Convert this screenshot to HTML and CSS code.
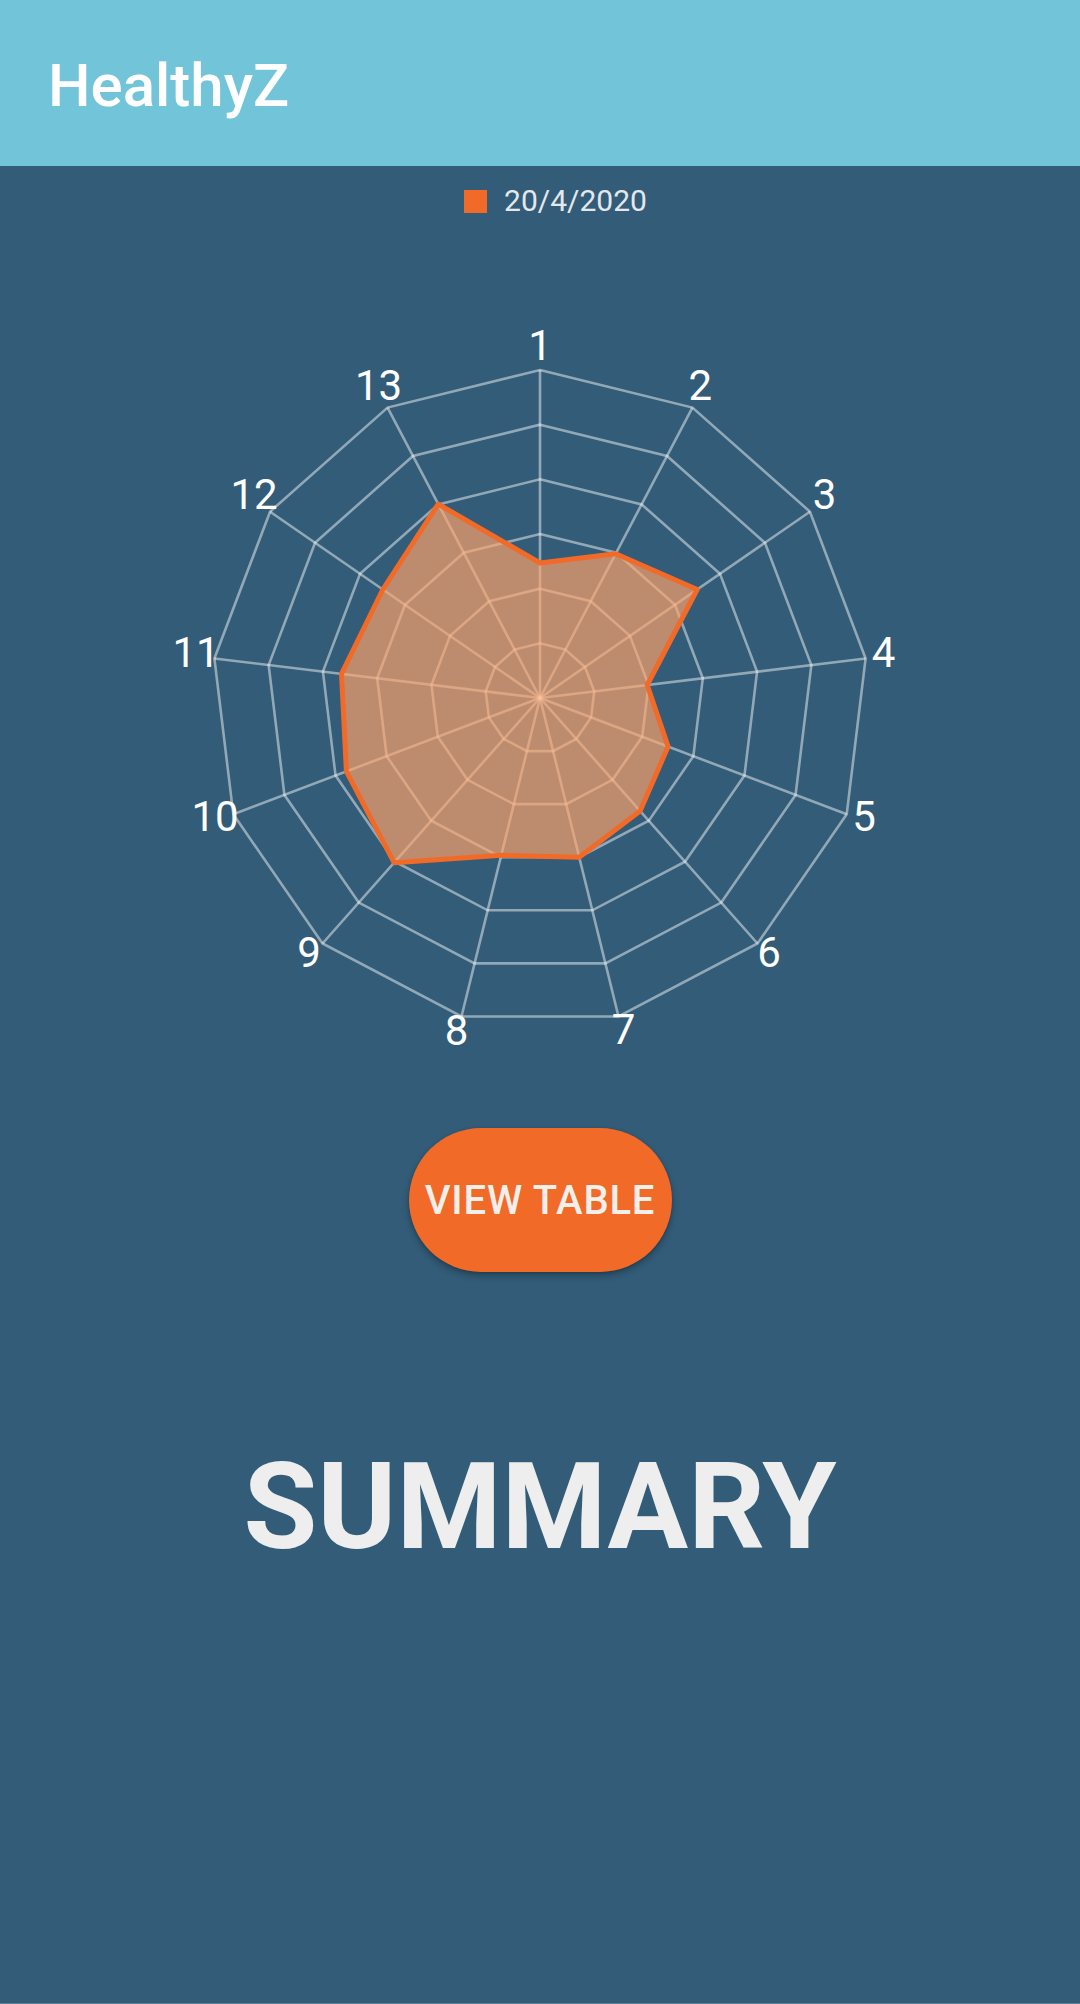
FILE: index.html
```html
<!DOCTYPE html>
<html lang="en">
<head>
<meta charset="utf-8">
<title>HealthyZ</title>
<link rel="stylesheet" href="styles.css">
</head>
<body>
<div class="app">
  <header class="toolbar">
    <h1 class="title">HealthyZ</h1>
  </header>
  <main class="content">
    <div class="legend">
      <span class="legend-swatch"></span>
      <span class="legend-label">20/4/2020</span>
    </div>
    <svg class="radar" width="1080" height="862" viewBox="0 0 1080 862" xmlns="http://www.w3.org/2000/svg">
      <g transform="translate(540 480)">
        <g class="web">
          <polygon transform="scale(54.667)" vector-effect="non-scaling-stroke" points="0,-1 0.46472,-0.88546 0.82298,-0.56806 0.99271,-0.12054 0.93502,0.3546 0.66312,0.74851 0.23932,0.97094 -0.23932,0.97094 -0.66312,0.74851 -0.93502,0.3546 -0.99271,-0.12054 -0.82298,-0.56806 -0.46472,-0.88546"/>
          <polygon transform="scale(109.333)" vector-effect="non-scaling-stroke" points="0,-1 0.46472,-0.88546 0.82298,-0.56806 0.99271,-0.12054 0.93502,0.3546 0.66312,0.74851 0.23932,0.97094 -0.23932,0.97094 -0.66312,0.74851 -0.93502,0.3546 -0.99271,-0.12054 -0.82298,-0.56806 -0.46472,-0.88546"/>
          <polygon transform="scale(164)" vector-effect="non-scaling-stroke" points="0,-1 0.46472,-0.88546 0.82298,-0.56806 0.99271,-0.12054 0.93502,0.3546 0.66312,0.74851 0.23932,0.97094 -0.23932,0.97094 -0.66312,0.74851 -0.93502,0.3546 -0.99271,-0.12054 -0.82298,-0.56806 -0.46472,-0.88546"/>
          <polygon transform="scale(218.667)" vector-effect="non-scaling-stroke" points="0,-1 0.46472,-0.88546 0.82298,-0.56806 0.99271,-0.12054 0.93502,0.3546 0.66312,0.74851 0.23932,0.97094 -0.23932,0.97094 -0.66312,0.74851 -0.93502,0.3546 -0.99271,-0.12054 -0.82298,-0.56806 -0.46472,-0.88546"/>
          <polygon transform="scale(273.333)" vector-effect="non-scaling-stroke" points="0,-1 0.46472,-0.88546 0.82298,-0.56806 0.99271,-0.12054 0.93502,0.3546 0.66312,0.74851 0.23932,0.97094 -0.23932,0.97094 -0.66312,0.74851 -0.93502,0.3546 -0.99271,-0.12054 -0.82298,-0.56806 -0.46472,-0.88546"/>
          <polygon transform="scale(328)" vector-effect="non-scaling-stroke" points="0,-1 0.46472,-0.88546 0.82298,-0.56806 0.99271,-0.12054 0.93502,0.3546 0.66312,0.74851 0.23932,0.97094 -0.23932,0.97094 -0.66312,0.74851 -0.93502,0.3546 -0.99271,-0.12054 -0.82298,-0.56806 -0.46472,-0.88546"/>
          <line x1="0" y1="0" x2="0" y2="-328"/>
          <line x1="0" y1="0" x2="152.4" y2="-290.4"/>
          <line x1="0" y1="0" x2="269.9" y2="-186.3"/>
          <line x1="0" y1="0" x2="325.6" y2="-39.5"/>
          <line x1="0" y1="0" x2="306.7" y2="116.3"/>
          <line x1="0" y1="0" x2="217.5" y2="245.5"/>
          <line x1="0" y1="0" x2="78.5" y2="318.5"/>
          <line x1="0" y1="0" x2="-78.5" y2="318.5"/>
          <line x1="0" y1="0" x2="-217.5" y2="245.5"/>
          <line x1="0" y1="0" x2="-306.7" y2="116.3"/>
          <line x1="0" y1="0" x2="-325.6" y2="-39.5"/>
          <line x1="0" y1="0" x2="-269.9" y2="-186.3"/>
          <line x1="0" y1="0" x2="-152.4" y2="-290.4"/>
        </g>
        <polygon class="data" points="0,-135 75.7,-144.3 157.2,-108.5 107.2,-13 128.1,48.6 100.1,113 39.2,159.2 -38.8,157.3 -145.9,164.7 -193.6,73.4 -198.5,-24.1 -157.2,-108.5 -101.8,-193.9"/>
        <g class="labels">
          <text x="0" y="-338">1</text>
          <text x="160.3" y="-298">2</text>
          <text x="284.5" y="-189">3</text>
          <text x="343.5" y="-31.5">4</text>
          <text x="324" y="132.5">5</text>
          <text x="229" y="269">6</text>
          <text x="83.5" y="346">7</text>
          <text x="-83.5" y="347">8</text>
          <text x="-231" y="269">9</text>
          <text x="-325" y="132.5">10</text>
          <text x="-344" y="-31.5">11</text>
          <text x="-286" y="-189">12</text>
          <text x="-161.5" y="-298">13</text>
        </g>
      </g>
    </svg>
    <button class="view-btn" type="button">VIEW TABLE</button>
    <h2 class="summary">SUMMARY</h2>
  </main>
</div>
</body>
</html>
```

FILE: styles.css
```css
html, body {
  margin: 0;
  padding: 0;
}

body {
  background: #325c78;
  font-family: Roboto, "Liberation Sans", sans-serif;
}

.app {
  min-height: 2004px;
  box-sizing: border-box;
  display: flex;
  flex-direction: column;
  background: #325c78;
  border-bottom: 1px solid #5c8098;
}

.toolbar {
  height: 166px;
  background: #72c4d9;
  display: flex;
  align-items: center;
  padding-left: 48px;
  box-sizing: border-box;
}

.title {
  margin: 6px 0 0 0;
  font-size: 60px;
  font-weight: 500;
  color: #ffffff;
  line-height: 1;
}

.content {
  display: flex;
  flex-direction: column;
  align-items: center;
}

.legend {
  margin-top: 18px;
  height: 34px;
  display: flex;
  align-items: center;
  gap: 17px;
  margin-left: 31px;
}

.legend-swatch {
  width: 23px;
  height: 23px;
  background: #f26a28;
}

.legend-label {
  font-size: 30px;
  line-height: 34px;
  color: #e4e8ec;
}

.radar {
  display: block;
}

.web polygon,
.web line {
  fill: none;
  stroke: rgba(255, 255, 255, 0.47);
  stroke-width: 2.6px;
}

.data {
  fill: rgba(255, 164, 106, 0.68);
  stroke: #f26a28;
  stroke-width: 5px;
  stroke-linejoin: round;
}

.labels text {
  fill: #ffffff;
  font-family: Roboto, "Liberation Sans", sans-serif;
  font-size: 42px;
  text-anchor: middle;
}

.view-btn {
  margin-top: 48px;
  width: 263px;
  height: 144px;
  border: none;
  border-radius: 72px;
  background: #f26a28;
  color: #f3efeb;
  font-family: Roboto, "Liberation Sans", sans-serif;
  font-size: 40px;
  font-weight: 500;
  letter-spacing: 0.8px;
  padding: 0;
  box-shadow: 0 4px 7px rgba(0, 0, 0, 0.24), 0 1px 3px rgba(0, 0, 0, 0.18);
}

.summary {
  margin: 175px 0 0 0;
  font-size: 120px;
  line-height: 120px;
  font-weight: 700;
  color: #eeeeee;
}
```
